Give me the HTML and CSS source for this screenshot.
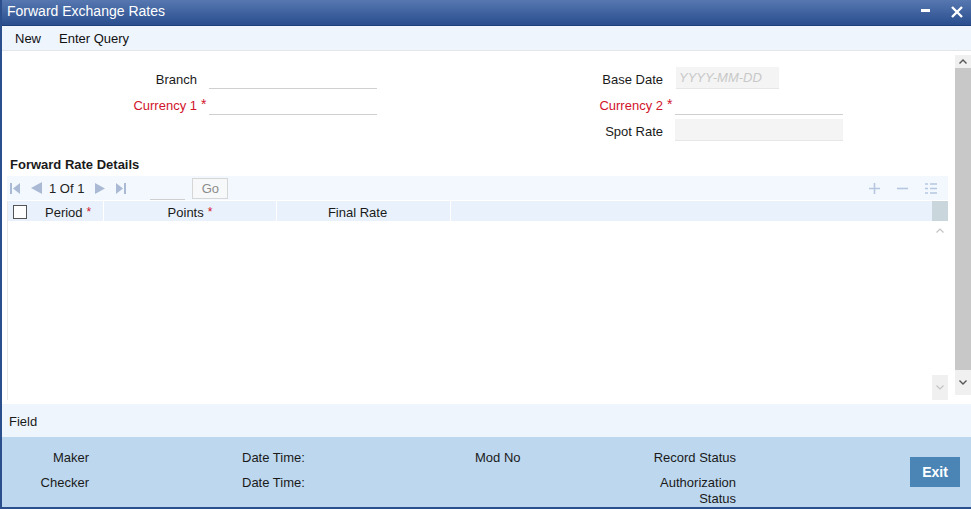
FILE: index.html
```html
<!DOCTYPE html>
<html lang="en">
<head>
    <meta charset="UTF-8">
    <title>Forward Exchange Rates</title>
    <link rel="stylesheet" href="styles.css">
</head>
<body>
<div class="window">
    <div class="titlebar">
        <span class="title">Forward Exchange Rates</span>
        <div class="win-buttons">
            <span class="minimize"></span>
            <svg class="close" width="12" height="12" viewBox="0 0 12 12">
                <path d="M1 1 L11 11 M11 1 L1 11" stroke="#fff" stroke-width="2.4"/>
            </svg>
        </div>
    </div>

    <div class="menubar">
        <a href="#">New</a>
        <a href="#">Enter Query</a>
    </div>

    <div class="content">
        <div class="main">
            <div class="form">
                <div class="form-col left">
                    <label>Branch</label><span></span><input type="text" class="line-input">
                    <label class="required">Currency 1</label><span class="star">*</span><input type="text" class="line-input">
                </div>
                <div class="form-col right">
                    <label>Base Date</label><span></span><input type="text" class="box-input short" placeholder="YYYY-MM-DD">
                    <label class="required">Currency 2</label><span class="star">*</span><input type="text" class="line-input">
                    <label>Spot Rate</label><span></span><input type="text" class="box-input">
                </div>
            </div>

            <div class="section-title">Forward Rate Details</div>

            <div class="grid">
                <div class="grid-toolbar">
                    <svg class="nav first" width="10" height="11" viewBox="0 0 10 11"><rect x="0" y="0" width="2" height="11"/><polygon points="10,0 3,5.5 10,11"/></svg>
                    <svg class="nav prev" width="11" height="12" viewBox="0 0 11 12"><polygon points="11,0 0,6 11,12"/></svg>
                    <span class="pages">1 Of 1</span>
                    <svg class="nav next" width="10" height="11" viewBox="0 0 10 11"><polygon points="0,0 10,5.5 0,11"/></svg>
                    <svg class="nav last" width="10" height="11" viewBox="0 0 10 11"><polygon points="0,0 7,5.5 0,11"/><rect x="8" y="0" width="2" height="11"/></svg>
                    <input type="text" class="page-input">
                    <button class="go">Go</button>
                    <div class="grid-actions">
                        <svg width="11" height="11" viewBox="0 0 11 11"><path d="M5.5 0 V11 M0 5.5 H11" stroke="#b5c6df" stroke-width="1.6"/></svg>
                        <svg width="11" height="11" viewBox="0 0 11 11"><path d="M0 5.5 H11" stroke="#b5c6df" stroke-width="1.6"/></svg>
                        <svg width="12" height="11" viewBox="0 0 12 11"><path d="M0 1 H3 M5 1 H12 M0 5.5 H3 M5 5.5 H12 M0 10 H3 M5 10 H12" stroke="#b5c6df" stroke-width="1.4"/></svg>
                    </div>
                </div>
                <div class="grid-body">
                    <div class="grid-table">
                        <div class="grid-head">
                            <div class="cell check"><input type="checkbox"></div>
                            <div class="cell period">Period <span class="req">*</span></div>
                            <div class="cell points">Points <span class="req">*</span></div>
                            <div class="cell final">Final Rate</div>
                            <div class="cell filler"></div>
                        </div>
                        <div class="grid-rows"></div>
                    </div>
                    <div class="grid-scroll">
                        <div class="gs-head"></div>
                        <div class="gs-up"><svg width="8" height="5" viewBox="0 0 8 5"><path d="M0.5 4.5 L4 1 L7.5 4.5" fill="none" stroke="#c4c4c4" stroke-width="1.2"/></svg></div>
                        <div class="gs-track"></div>
                        <div class="gs-down"><svg width="8" height="5" viewBox="0 0 8 5"><path d="M0.5 0.5 L4 4 L7.5 0.5" fill="none" stroke="#c4c4c4" stroke-width="1.2"/></svg></div>
                    </div>
                </div>
            </div>
        </div>

        <div class="vscroll">
            <div class="vs-up"><svg width="8" height="5" viewBox="0 0 8 5"><path d="M0.5 4.5 L4 1 L7.5 4.5" fill="none" stroke="#555" stroke-width="1.4"/></svg></div>
            <div class="vs-thumb"></div>
            <div class="vs-down"><svg width="8" height="5" viewBox="0 0 8 5"><path d="M0.5 0.5 L4 4 L7.5 0.5" fill="none" stroke="#555" stroke-width="1.4"/></svg></div>
        </div>
    </div>

    <div class="field-bar">Field</div>

    <div class="footer">
        <div class="audit">
            <span class="who">Maker</span>
            <span class="when">Date Time:</span>
            <span class="mod">Mod No</span>
            <span class="status">Record Status</span>
            <span class="who">Checker</span>
            <span class="when">Date Time:</span>
            <span class="mod"></span>
            <span class="status">Authorization Status</span>
        </div>
        <button class="exit">Exit</button>
    </div>
</div>
</body>
</html>
```

FILE: styles.css
```css
body {
    margin: 0;
    font-family: "Liberation Sans", Arial, sans-serif;
    font-size: 13px;
    color: #1a1a1a;
    background-color: #fff;
}

.window {
    width: 971px;
    height: 509px;
    box-sizing: border-box;
    border-left: 2px solid #2b4f8c;
    border-bottom: 2px solid #2b4f8c;
    display: flex;
    flex-direction: column;
    overflow: hidden;
}

.titlebar {
    height: 26px;
    flex-shrink: 0;
    box-sizing: border-box;
    background: linear-gradient(#5677b0, #2a4e8e);
    border-bottom: 1px solid #1f3f78;
    display: flex;
    align-items: center;
    justify-content: space-between;
    padding: 0 8px 0 5px;
}

.title {
    color: #fff;
    font-size: 14px;
    margin-top: -3px;
}

.win-buttons {
    display: flex;
    align-items: center;
    margin-top: -2px;
}

.minimize {
    display: block;
    width: 9px;
    height: 3px;
    background-color: #fff;
    margin-right: 21px;
    margin-top: -3px;
}

.menubar {
    height: 25px;
    flex-shrink: 0;
    box-sizing: border-box;
    background-color: #eef5fd;
    border-bottom: 1px solid #e2e6ea;
    display: flex;
    align-items: center;
    padding-left: 13px;
}

.menubar a {
    color: #111;
    text-decoration: none;
    margin-right: 18px;
}

.content {
    flex: 1;
    display: flex;
    min-height: 0;
}

.main {
    flex: 1;
    display: flex;
    flex-direction: column;
    min-width: 0;
}

/* header form */
.form {
    display: flex;
    padding-top: 15px;
    padding-left: 55px;
}

.form-col {
    display: grid;
    grid-template-columns: 140px 12px 168px;
    grid-auto-rows: 26px;
    align-items: center;
}

.form-col.right {
    margin-left: 146px;
}

.form-col label {
    text-align: right;
}

.form-col .required {
    color: #d1142b;
}

.star {
    color: #d1142b;
    font-size: 14px;
    padding-left: 4px;
    align-self: start;
    padding-top: 4px;
}

.line-input,
.box-input {
    font-family: inherit;
    font-size: 13px;
    height: 22px;
    box-sizing: border-box;
    border: none;
    border-bottom: 1px solid #cfcfcf;
    background: transparent;
    outline: none;
    padding: 0 3px;
    width: 168px;
    margin-top: -2px;
}

.box-input {
    background-color: #f4f4f4;
    border-bottom: 1px solid #e6e6e6;
}

.box-input.short {
    width: 103px;
    margin-left: 1px;
}

.box-input::placeholder {
    color: #c8c8c8;
    font-style: italic;
}

.section-title {
    font-weight: bold;
    padding-left: 8px;
    margin-top: 12px;
    line-height: 18px;
}

/* grid */
.grid {
    flex: 1;
    display: flex;
    flex-direction: column;
    margin: 2px 7px 3px 5px;
    min-height: 0;
}

.grid-toolbar {
    height: 24px;
    flex-shrink: 0;
    background-color: #f3f8fe;
    display: flex;
    align-items: center;
}

.nav {
    fill: #aabad4;
}

.nav.first { margin-left: 3px; }
.nav.prev { margin-left: 11px; }
.nav.next { margin-left: 11px; }
.nav.last { margin-left: 11px; }

.pages {
    margin-left: 7px;
    color: #222;
}

.page-input {
    width: 35px;
    height: 22px;
    box-sizing: border-box;
    margin-left: 24px;
    margin-top: 2px;
    border: none;
    border-bottom: 1px solid #cfcfcf;
    background: transparent;
    outline: none;
}

.go {
    margin-left: 7px;
    width: 36px;
    height: 21px;
    border: 1px solid #d6d6d6;
    background-color: #f6f8fa;
    color: #8c8c8c;
    font-family: inherit;
    font-size: 13px;
    padding: 0;
}

.grid-actions {
    margin-left: auto;
    margin-right: 11px;
    display: flex;
    align-items: center;
    gap: 17px;
}

.grid-body {
    flex: 1;
    display: flex;
    margin-top: 1px;
    min-height: 0;
}

.grid-table {
    flex: 1;
    display: flex;
    flex-direction: column;
    border-left: 1px solid #e8e8e8;
}

.grid-head {
    height: 20px;
    display: flex;
    background-color: #e9f2fc;
}

.cell {
    display: flex;
    align-items: center;
    border-right: 1px solid #fff;
    box-sizing: border-box;
    padding-top: 2px;
}

.cell.check {
    width: 30px;
    padding-left: 5px;
    padding-top: 1px;
    border-right: none;
}

.cell.check input {
    width: 14px;
    height: 14px;
    margin: 0;
    appearance: none;
    border: 1px solid #555;
    background-color: #fff;
}

.cell.period {
    width: 66px;
    padding-left: 7px;
}

.cell.points {
    width: 173px;
    justify-content: center;
    padding-left: 0;
}

.cell.final {
    width: 174px;
    justify-content: center;
    padding-right: 12px;
}

.cell.filler {
    flex: 1;
    border-right: none;
}

.req {
    color: #d1142b;
    margin-left: 4px;
    font-size: 12px;
}

.grid-rows {
    flex: 1;
}

.grid-scroll {
    width: 16px;
    display: flex;
    flex-direction: column;
}

.gs-head {
    height: 20px;
    background-color: #c9d6dc;
}

.gs-up {
    height: 18px;
    display: flex;
    align-items: center;
    justify-content: center;
}

.gs-track {
    flex: 1;
}

.gs-down {
    height: 25px;
    background-color: #f0f0f0;
    display: flex;
    align-items: center;
    justify-content: center;
}

.vscroll {
    width: 16px;
    flex-shrink: 0;
    display: flex;
    flex-direction: column;
    padding: 4px 0 8px;
}

.vs-up {
    height: 13px;
    background-color: #f0f0f0;
    display: flex;
    align-items: center;
    justify-content: center;
}

.vs-thumb {
    flex: 1;
    background-color: #c8c8c8;
}

.vs-down {
    height: 25px;
    background-color: #f0f0f0;
    display: flex;
    align-items: center;
    justify-content: center;
}

/* bottom */
.field-bar {
    height: 33px;
    flex-shrink: 0;
    box-sizing: border-box;
    background-color: #eef5fd;
    display: flex;
    align-items: center;
    padding-left: 7px;
    padding-top: 2px;
    margin-top: 1px;
}

.footer {
    height: 70px;
    flex-shrink: 0;
    background-color: #bdd7ee;
    display: flex;
    align-items: flex-start;
}

.audit {
    display: grid;
    grid-template-columns: 87px 153px 233px 161px 100px;
    padding-top: 13px;
    row-gap: 9px;
    line-height: 16px;
}

.audit .who {
    grid-column: 1;
    text-align: right;
}

.audit .when {
    grid-column: 3;
}

.audit .mod {
    grid-column: 4;
}

.audit .status {
    grid-column: 5;
    text-align: right;
}

.exit {
    margin-left: auto;
    margin-right: 11px;
    margin-top: 20px;
    width: 50px;
    height: 30px;
    border: none;
    background-color: #4a85b6;
    color: #fff;
    font-family: inherit;
    font-size: 14px;
    font-weight: bold;
    padding: 0;
}
```
